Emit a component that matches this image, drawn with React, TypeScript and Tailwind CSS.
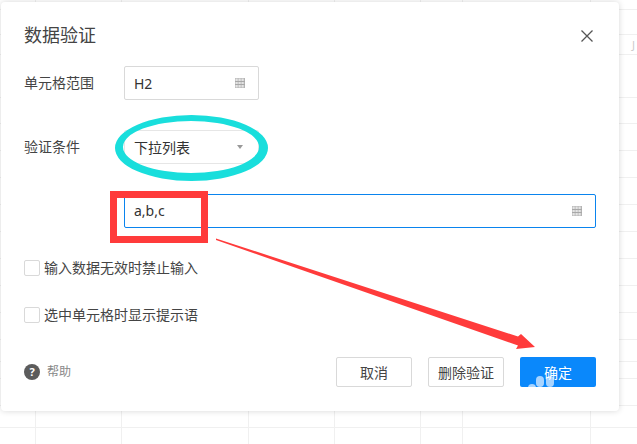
const font = { fontFamily: '"Noto Sans", "Noto Sans CJK SC", sans-serif' };

const rowLines = [9, 34, 54, 97, 123, 150, 177, 204, 231, 258, 285, 312, 339, 361, 378, 405, 427];
const colLines = [35, 121, 248, 334, 420, 462, 590];

function GridIcon() {
  return (
    <svg width="10" height="10" viewBox="0 0 10 10" className="shrink-0">
      <rect width="10" height="10" fill="#b4b4b4" />
      {[0.5, 3.5, 6.5].map((x) => (
        <rect key={x} x={x} y="0.5" width="2.2" height="9" fill="#e4e4e4" />
      ))}
      {[3, 6].map((y) => (
        <rect key={y} x="0" y={y} width="10" height="1" fill="#a8a8a8" />
      ))}
    </svg>
  );
}

function Check({ label }: { label: string }) {
  return (
    <div className="flex items-center h-4">
      <div className="w-4 h-4 rounded-[2px] border border-[#d9d9d9] bg-white" />
      <span className="ml-1 text-[14px] leading-4 text-[#444]">{label}</span>
    </div>
  );
}

export default function App() {
  return (
    <div className="relative w-[637px] h-[444px] overflow-hidden bg-white" style={font}>
      {/* sheet behind the dialog */}
      <svg className="absolute inset-0" width="637" height="444">
        {rowLines.map((y) => (
          <line key={y} x1="0" x2="637" y1={y + 0.5} y2={y + 0.5} stroke="#f0f0f0" />
        ))}
        {colLines.map((x) => (
          <line key={x} x1={x + 0.5} x2={x + 0.5} y1="0" y2="444" stroke="#f0f0f0" />
        ))}
      </svg>
      <span className="absolute left-[632px] top-[37px] text-[11px] leading-4 text-[#ccc]">J</span>

      {/* dialog */}
      <div className="relative ml-px mt-[2px] w-[618px] h-[409px] rounded-[4px] bg-white pl-[23px] pr-[23px] pt-[20px] shadow-[0_0_6px_rgba(0,0,0,0.16)]">
        <div className="flex items-center justify-between h-[26px]">
          <h2 className="text-[18px] leading-[26px] text-[#444]">数据验证</h2>
          <svg width="14" height="14" viewBox="0 0 14 14" className="mr-[2px] mt-[1px]">
            <path d="M1.5 1.5 L12.5 12.5 M12.5 1.5 L1.5 12.5" stroke="#555" strokeWidth="1.3" fill="none" />
          </svg>
        </div>

        <div className="flex items-center mt-[18px]">
          <span className="w-[100px] pb-[2px] text-[14px] text-[#444]">单元格范围</span>
          <div className="flex items-center justify-between w-[135px] h-[34px] rounded-[2px] border border-[#d9d9d9] pl-[9px] pr-[13px] text-[14px] text-[#333]">
            <span>H2</span>
            <GridIcon />
          </div>
        </div>

        <div className="flex items-center mt-[30px]">
          <span className="w-[100px] pb-[2px] text-[14px] text-[#444]">验证条件</span>
          <div className="flex items-center justify-between w-[135px] h-[34px] rounded-[2px] border border-[#e6e6e6] pl-[9px] pr-[15px] text-[14px] text-[#333]">
            <span>下拉列表</span>
            <div className="w-0 h-0 border-x-[3px] border-x-transparent border-t-[4px] border-t-[#999]" />
          </div>
        </div>

        <div className="flex items-center justify-between ml-[100px] mt-[30px] w-[472px] h-[34px] rounded-[2px] border border-[#0a84ee] pl-[9px] pr-[13px] text-[14px] text-[#333]">
          <span className="pb-[2px]">a,b,c</span>
          <GridIcon />
        </div>

        <div className="mt-[32px]">
          <Check label="输入数据无效时禁止输入" />
        </div>
        <div className="mt-[31px]">
          <Check label="选中单元格时显示提示语" />
        </div>

        <div className="flex items-center mt-[34px] h-[30px]">
          <div className="flex items-center justify-center w-4 h-4 rounded-full bg-[#5c5c5c] text-[11px] font-bold leading-4 text-white">?</div>
          <span className="ml-[7px] text-[12px] text-[#888]">帮助</span>
          <button className="ml-auto w-[76px] h-[30px] rounded-[2px] border border-[#d9d9d9] bg-white text-[14px] text-[#444]">取消</button>
          <button className="ml-4 w-[76px] h-[30px] rounded-[2px] border border-[#d9d9d9] bg-white text-[14px] text-[#444]">删除验证</button>
          <button className="relative ml-4 w-[76px] h-[30px] overflow-hidden rounded-[2px] bg-[#0a88fb] text-[14px] text-white">
            <span className="absolute left-[16px] top-[19px] w-2 h-[11px] rounded-full bg-[#a8d4ff]" />
            <span className="absolute left-[26px] top-[19px] w-2 h-[11px] rounded-full bg-[#a8d4ff]" />
            <span className="absolute left-[8px] top-[27px] w-2 h-[11px] rounded-full bg-[#a8d4ff]" />
            <span className="relative">确定</span>
          </button>
        </div>
      </div>

      {/* hand drawn markup on top of the screenshot */}
      <svg className="absolute inset-0 pointer-events-none" width="637" height="444">
        <path
          fillRule="evenodd"
          fill="#19dedc"
          d="M115 148 a76.5 33 0 1 0 153 0 a76.5 33 0 1 0 -153 0 Z M123 147 a68 26 0 1 0 136 0 a68 26 0 1 0 -136 0 Z"
        />
        <rect x="113.5" y="194.5" width="91" height="45" fill="none" stroke="#ff3b3b" strokeWidth="7" />
        <polygon points="216,238.5 518,336.5 521,334 535,347 516,349 518,345.5 216,240" fill="#ff3b3b" />
      </svg>
    </div>
  );
}
